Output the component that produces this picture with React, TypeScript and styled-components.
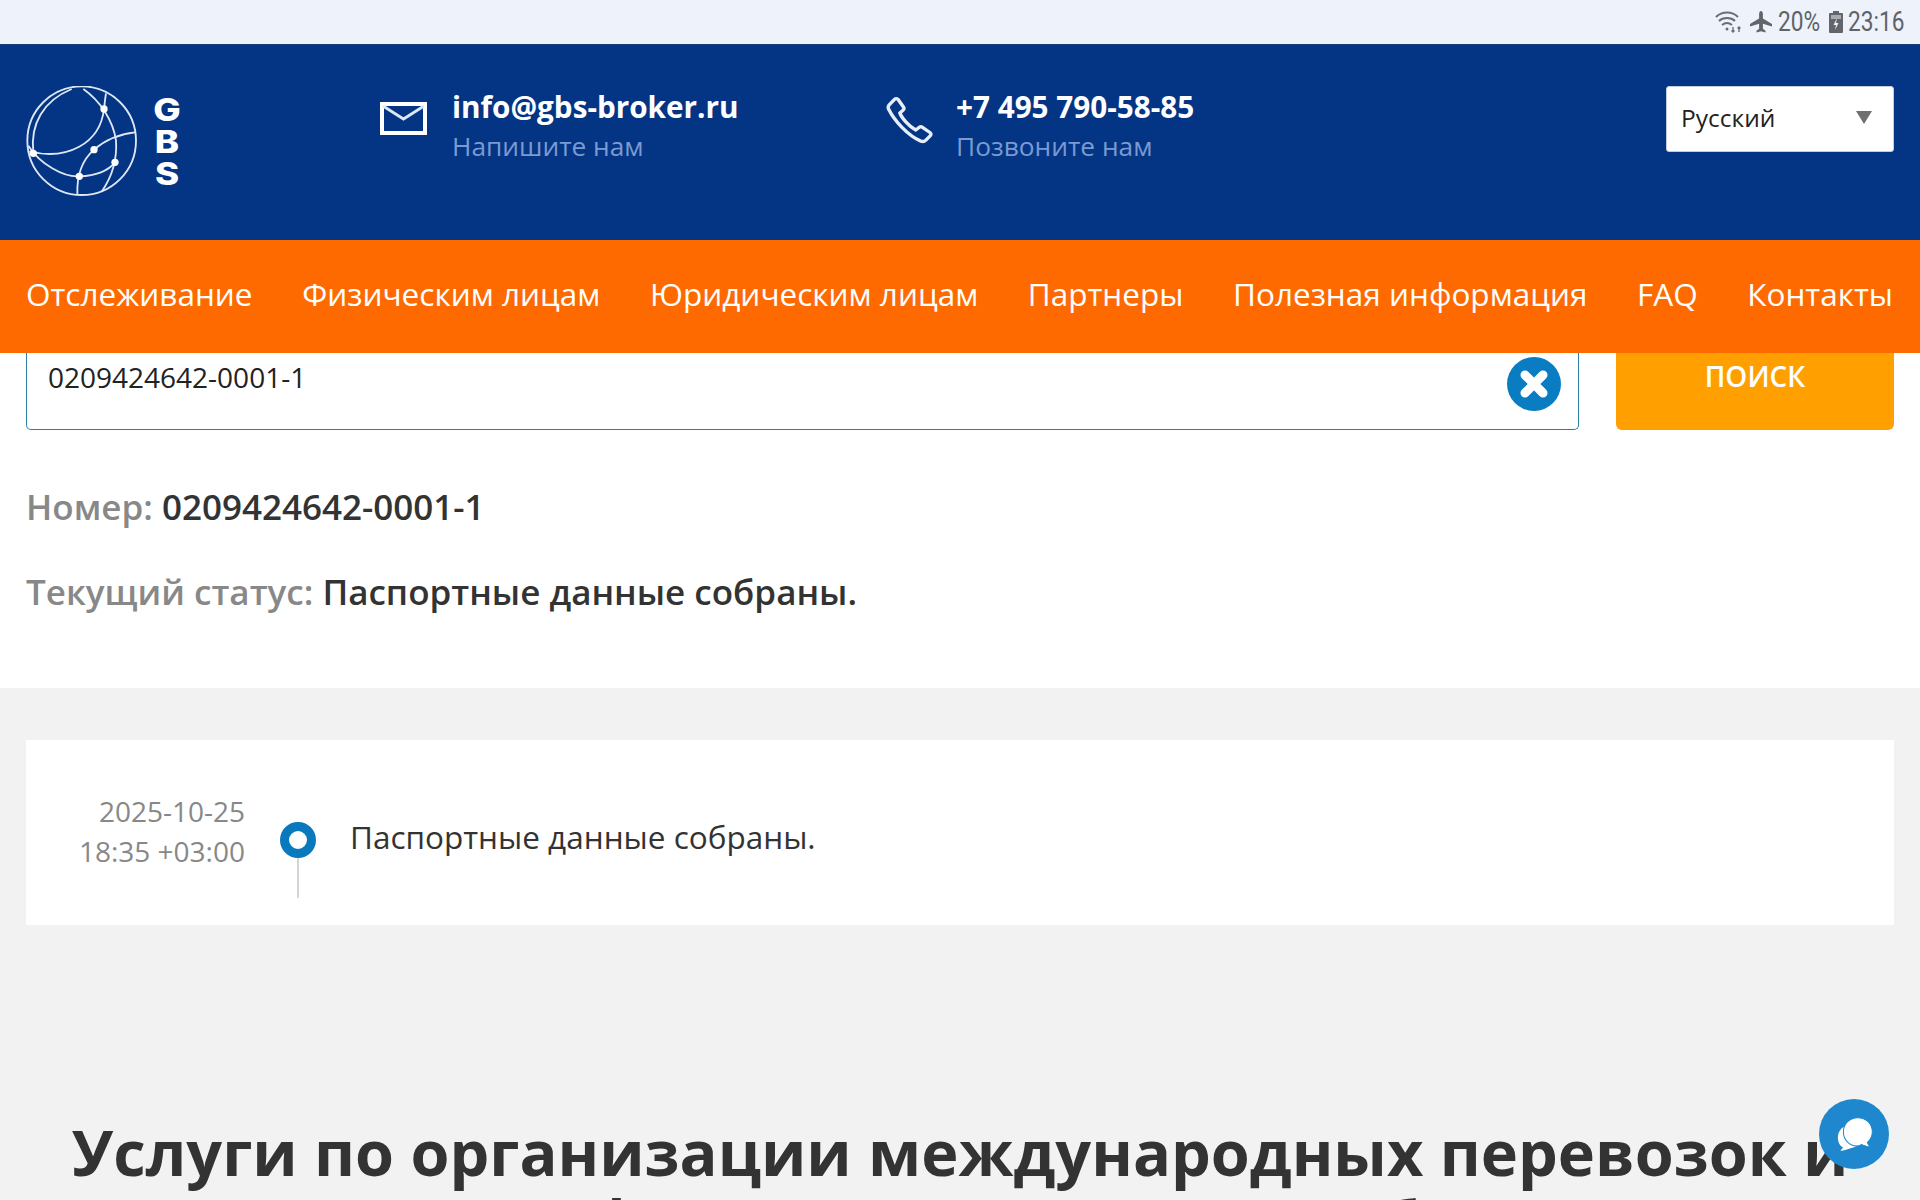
import React from "react"
import styled, {createGlobalStyle} from "styled-components"

const GlobalStyle = createGlobalStyle`
  html, body {
    margin: 0;
    padding: 0;
    height: 1200px;
    overflow: hidden;
    background: #f2f2f2;
    font-family: "Open Sans", "Noto Sans", sans-serif;
  }
  * {
    box-sizing: border-box;
  }
`

const Page = styled.div`
  width: 1920px;
  height: 1200px;
  overflow: hidden;
  position: relative;
`
const StatusBar = styled.div`
  height: 44px;
  background: #eef2fb;
  display: flex;
  align-items: center;
  justify-content: flex-end;
  gap: 5px;
  padding-right: 14px;
  color: #5f6368;
  font-family: Roboto, sans-serif;
  font-size: 27px;
`
const StatusText = styled.span<{$width: number}>`
  display: inline-block;
  width: ${(p) => p.$width}px;
  transform: scaleX(0.84);
  transform-origin: left center;
  white-space: nowrap;
`
const Header = styled.header`
  height: 196px;
  background: #043584;
  border-top: 1px solid #1b3c78;
  display: flex;
  padding: 41px 26px 0;
`
const Logo = styled.div`
  width: 354px;
  display: flex;
  gap: 16px;
  height: 112px;
`
const LogoLetters = styled.div`
  display: flex;
  flex-direction: column;
  align-items: center;
  width: 26px;
  margin-top: 8px;
  font-family: Inter, sans-serif;
  font-weight: 800;
  font-size: 31px;
  line-height: 32px;
  color: #fff;
  transform: scaleX(1.18);
`
const LogoLetter = styled.div`
  height: 32px;
`
const Contact = styled.div<{$width: number}>`
  width: ${(p) => p.$width}px;
  display: flex;
  gap: 25px;
  padding-top: 2px;
`
const ContactIcon = styled.div<{$top: number; $left?: number}>`
  width: 47px;
  padding-top: ${(p) => p.$top}px;
  margin-left: ${(p) => p.$left || 0}px;
  margin-right: ${(p) => -(p.$left || 0)}px;
  flex-shrink: 0;
`
const ContactLines = styled.div`
  display: flex;
  flex-direction: column;
`
const ContactMain = styled.div`
  color: #fff;
  font-size: 29.7px;
  font-weight: 700;
  line-height: 38px;
  white-space: nowrap;
`
const ContactSub = styled.div`
  color: #7a9ad2;
  font-size: 26.3px;
  line-height: 40px;
  white-space: nowrap;
`
const LangSelect = styled.div`
  width: 228px;
  height: 66px;
  margin-left: auto;
  background: #fff;
  border: 1px solid #c3ccdb;
  border-radius: 3px;
  display: flex;
  align-items: center;
  justify-content: space-between;
  padding: 0 21px 4px 14px;
  color: #222;
  font-size: 24.5px;
`
const Arrow = styled.span`
  width: 0;
  height: 0;
  border-left: 8px solid transparent;
  border-right: 8px solid transparent;
  border-top: 13px solid #6f6f6f;
`
const Nav = styled.nav`
  height: 113px;
  background: #ff6a00;
  display: flex;
  align-items: center;
  justify-content: space-between;
  padding: 0 27px 7px 26px;
  position: relative;
  z-index: 2;
`
const NavLink = styled.a`
  color: #fff;
  font-size: 31.5px;
  white-space: nowrap;
`
const SearchSection = styled.section`
  background: #fff;
  height: 335px;
  padding: 0 26px;
`
const SearchRow = styled.div`
  display: flex;
  gap: 37px;
  height: 77px;
`
const SearchBox = styled.div`
  flex: 1;
  border: 1px solid #2b7f9f;
  border-top: none;
  border-radius: 0 0 5px 5px;
  display: flex;
  align-items: flex-start;
  justify-content: space-between;
  padding: 6px 17px 0 21px;
  color: #222;
  font-size: 28px;
  line-height: 36px;
`
const ClearButton = styled.div`
  width: 54px;
  height: 54px;
  border-radius: 50%;
  background: #0a7dc2;
  display: flex;
  align-items: center;
  justify-content: center;
  flex-shrink: 0;
  margin-top: -2px;
`
const SearchButton = styled.button`
  width: 278px;
  height: 77px;
  background: #ffa000;
  border: none;
  border-radius: 0 0 6px 6px;
  color: #fff;
  font-family: inherit;
  font-size: 28px;
  font-weight: 600;
  padding: 0 0 32px;
  text-transform: uppercase;
`
const InfoLine = styled.div<{$top: number}>`
  margin-top: ${(p) => p.$top}px;
  font-size: 35px;
  line-height: 46px;
  font-weight: 600;
  color: #333;
`
const InfoLabel = styled.span`
  color: #888;
`
const Timeline = styled.section`
  padding: 52px 26px 0;
`
const TimelineCard = styled.div`
  height: 185px;
  background: #fff;
  display: flex;
  padding-top: 51px;
`
const TimelineDate = styled.div`
  width: 219px;
  text-align: right;
  color: #888;
  font-size: 28px;
  line-height: 40px;
  white-space: nowrap;
`
const Marker = styled.div`
  width: 36px;
  margin-left: 35px;
  display: flex;
  flex-direction: column;
  align-items: center;
  padding-top: 31px;
`
const MarkerDot = styled.div`
  width: 36px;
  height: 36px;
  border-radius: 50%;
  border: 9px solid #0a78bd;
  background: #fff;
  flex-shrink: 0;
`
const MarkerLine = styled.div`
  width: 2px;
  height: 40px;
  background: #d5d5d5;
`
const TimelineText = styled.div`
  margin-left: 34px;
  padding-top: 26px;
  color: #333;
  font-size: 31.5px;
  line-height: 40px;
  white-space: nowrap;
`
const Title = styled.h1`
  margin: 192px 0 0;
  padding: 0 30px;
  text-align: center;
  color: #333;
  font-size: 63px;
  font-weight: 700;
  line-height: 70px;
`
const ChatButton = styled.div`
  position: absolute;
  left: 1819px;
  top: 1099px;
  width: 70px;
  height: 70px;
  border-radius: 50%;
  background: #1f87cd;
  display: flex;
  align-items: center;
  justify-content: center;
`

const WifiIcon = () => (
  <svg width="30" height="24" viewBox="0 0 28 24" fill="none" stroke="#6a6e73" strokeWidth="2">
    <path d="M1 7c6-6 16-6 22 0" />
    <path d="M4 11c4-4 12-4 16 0" />
    <path d="M7 15c3-2.500 7-2.500 10 0" />
    <circle cx="12" cy="19" r="1.500" fill="#6a6e73" stroke="none" />
    <path d="M18 17v5M16.500 20.500l1.500 1.500 1.500-1.500M24 22v-5M22.500 18.500l1.500-1.500 1.500 1.500" strokeWidth="1.400" />
  </svg>
)

const PlaneIcon = () => (
  <svg width="24" height="22" viewBox="0 0 24 22" fill="#62666b">
    <path d="M12 0c1.200 0 1.900 1.500 1.900 3v4.500L23 13v2.600l-9.100-2.800v5l2.600 2v1.700L12 20.300 7.500 21.500v-1.700l2.600-2v-5L1 15.600V13l9.100-5.500V3C10.100 1.500 10.800 0 12 0z" />
  </svg>
)

const BatteryIcon = () => (
  <svg width="14" height="22" viewBox="0 0 14 22">
    <path d="M4 0h6v2h3a1 1 0 0 1 1 1v18a1 1 0 0 1-1 1H1a1 1 0 0 1-1-1V3a1 1 0 0 1 1-1h3z" fill="#62666b" />
    <rect x="2" y="4" width="10" height="4" fill="#a9abaf" />
    <path d="M8 7l-3.500 7H7l-1 5 3.500-7H7z" fill="#eef2fb" />
  </svg>
)

const GlobeLogo = () => (
  <svg width="112" height="112" viewBox="78 76 336 336" fill="none" stroke="#dfe7f5" strokeWidth="5.500">
    <circle cx="245" cy="240" r="163" />
    <path d="M215 85C130 120 90 190 100 275" />
    <path d="M88 272C200 300 300 250 312 145" />
    <path d="M250 85C300 120 340 180 348 240C352 300 335 350 305 393" />
    <path d="M318 98C315 115 314 130 312 145" />
    <path d="M85 255C120 310 190 350 238 347C285 345 325 330 345 305" />
    <path d="M232 402C230 340 250 295 282 267C315 238 360 220 405 215" />
    <g fill="#fff" stroke="none">
      <circle cx="312" cy="145" r="11" />
      <circle cx="100" cy="278" r="11" />
      <circle cx="282" cy="267" r="11" />
      <circle cx="345" cy="305" r="11" />
      <circle cx="238" cy="347" r="11" />
    </g>
  </svg>
)

const MailIcon = () => (
  <svg width="47" height="33" viewBox="0 0 47 33" fill="none" stroke="#fff">
    <rect x="2" y="2" width="43" height="29" strokeWidth="4" />
    <path d="M3 4l20.500 13L44 4" strokeWidth="2.800" stroke="#dfe7f5" />
  </svg>
)

const PhoneIcon = () => (
  <svg width="50" height="49" viewBox="0 0 47 47" preserveAspectRatio="none" fill="none" stroke="#e8eef8" strokeWidth="3.200" strokeLinejoin="round">
    <path d="M3 8.500 8 3.200c1-1 2.600-1 3.400.2l5 7.200c.7 1 .5 2.200-.4 3l-3 2.600c1.500 4.500 8.500 13 15 16.400l3.300-2.600c.9-.7 2-.7 3 0l7 5c1.200.9 1.200 2.300.2 3.300l-4 4c-1.200 1.200-3 1.600-4.800 1C21 38.500 8 24 2.400 12.500 1.800 11 2 9.700 3 8.500z" />
  </svg>
)

const CrossIcon = () => (
  <svg width="34" height="34" viewBox="0 0 34 34">
    <path d="M8 8l18 18M26 8L8 26" stroke="#fff" strokeWidth="9" strokeLinecap="round" />
  </svg>
)

const ChatIcon = () => (
  <svg width="37" height="37" viewBox="165 105 110 110">
    <path d="M205 130C180 135 166 155 172 180C174 190 180 196 186 198L178 209C195 207 205 202 218 198C240 195 230 130 205 130z" fill="#fff" />
    <path d="M230 110C254 110 273 128 273 152C273 166 267 176 258 184L266 198C254 196 246 192 240 190C236 193 232 194 228 194C204 194 187 176 187 152C187 128 206 110 230 110z" fill="#fff" stroke="#1f87cd" strokeWidth="3" />
  </svg>
)

const navItems = [
  "Отслеживание",
  "Физическим лицам",
  "Юридическим лицам",
  "Партнеры",
  "Полезная информация",
  "FAQ",
  "Контакты",
]

export default function App() {
  return (
    <Page>
      <GlobalStyle />
      <StatusBar>
        <WifiIcon />
        <PlaneIcon />
        <StatusText $width={46}>20%</StatusText>
        <BatteryIcon />
        <StatusText $width={58}>23:16</StatusText>
      </StatusBar>
      <Header>
        <Logo>
          <GlobeLogo />
          <LogoLetters>
            <LogoLetter>G</LogoLetter>
            <LogoLetter>B</LogoLetter>
            <LogoLetter>S</LogoLetter>
          </LogoLetters>
        </Logo>
        <Contact $width={504}>
          <ContactIcon $top={14}><MailIcon /></ContactIcon>
          <ContactLines>
            <ContactMain>info@gbs-broker.ru</ContactMain>
            <ContactSub>Напишите нам</ContactSub>
          </ContactLines>
        </Contact>
        <Contact $width={400}>
          <ContactIcon $top={8} $left={2}><PhoneIcon /></ContactIcon>
          <ContactLines>
            <ContactMain>+7 495 790-58-85</ContactMain>
            <ContactSub>Позвоните нам</ContactSub>
          </ContactLines>
        </Contact>
        <LangSelect>
          Русский
          <Arrow />
        </LangSelect>
      </Header>
      <Nav>
        {navItems.map((item) => (
          <NavLink key={item}>{item}</NavLink>
        ))}
      </Nav>
      <SearchSection>
        <SearchRow>
          <SearchBox>
            0209424642-0001-1
            <ClearButton><CrossIcon /></ClearButton>
          </SearchBox>
          <SearchButton>Поиск</SearchButton>
        </SearchRow>
        <InfoLine $top={54}>
          <InfoLabel>Номер: </InfoLabel>0209424642-0001-1
        </InfoLine>
        <InfoLine $top={39}>
          <InfoLabel>Текущий статус: </InfoLabel>Паспортные данные собраны.
        </InfoLine>
      </SearchSection>
      <Timeline>
        <TimelineCard>
          <TimelineDate>
            2025-10-25
            <br />
            18:35 +03:00
          </TimelineDate>
          <Marker>
            <MarkerDot />
            <MarkerLine />
          </Marker>
          <TimelineText>Паспортные данные собраны.</TimelineText>
        </TimelineCard>
      </Timeline>
      <Title>Услуги по организации международных перевозок и таможенного оформления грузов в любых регионах</Title>
      <ChatButton><ChatIcon /></ChatButton>
    </Page>
  )
}
